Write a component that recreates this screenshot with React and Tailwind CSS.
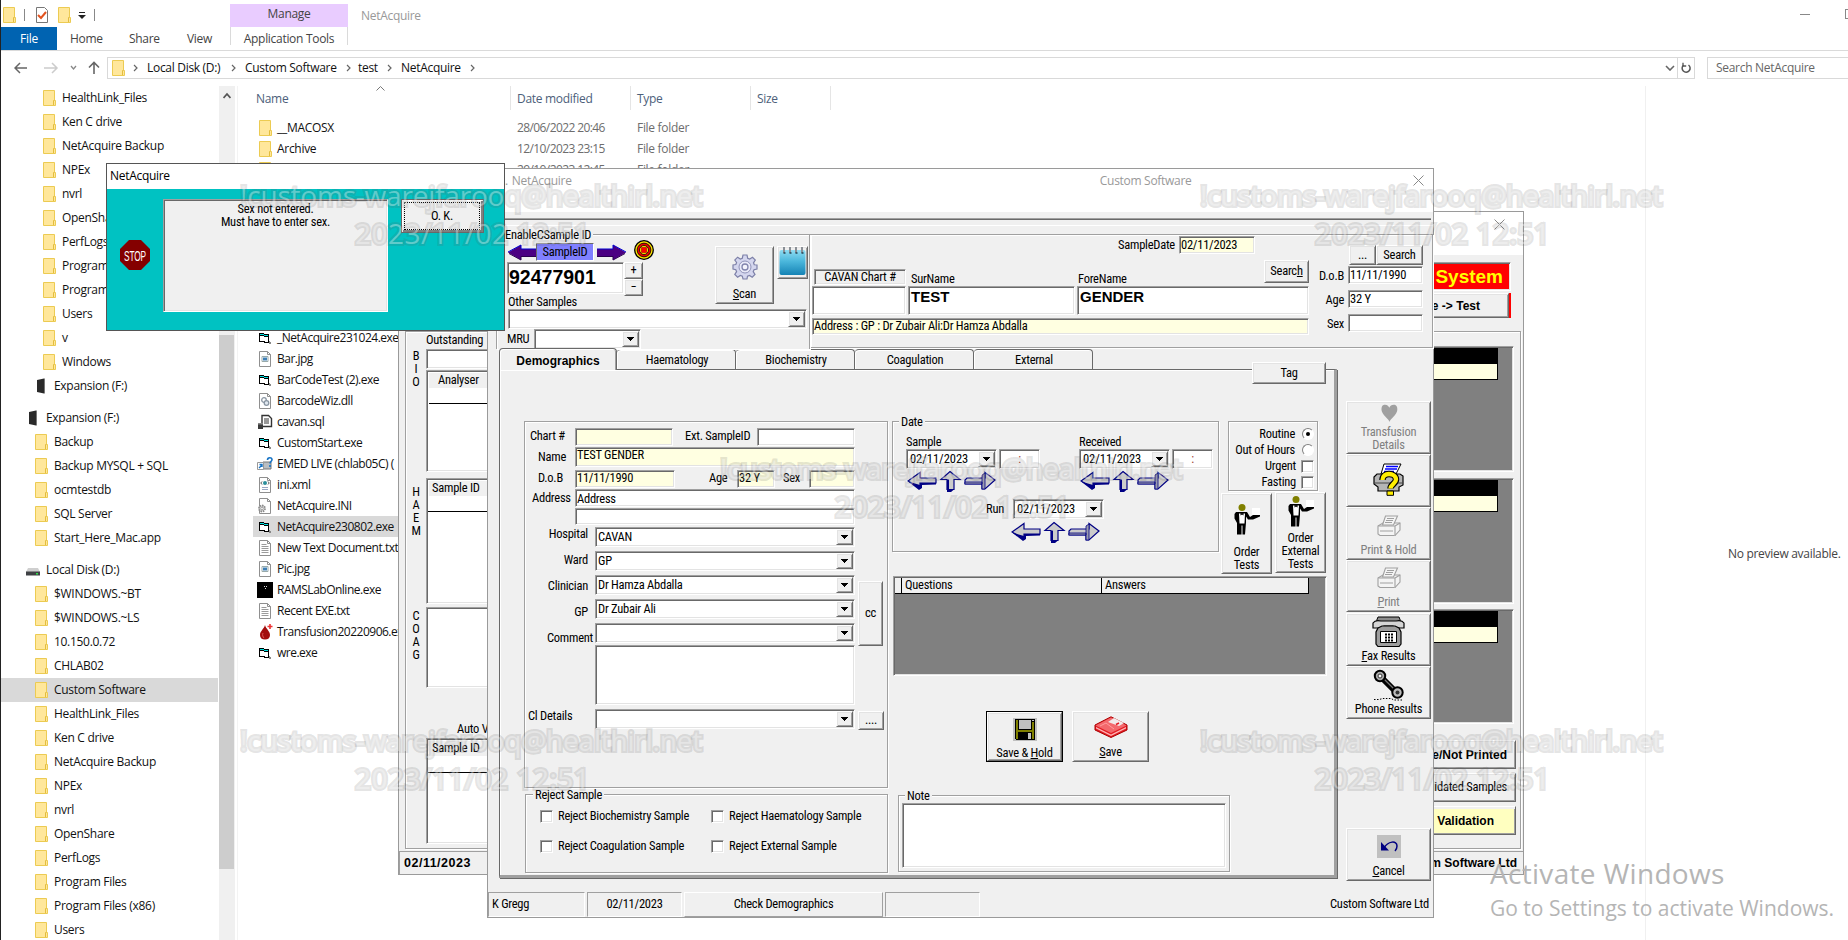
import React from "react";

const SUNK =
  "border border-t-[#a0a0a0] border-l-[#a0a0a0] border-r-white border-b-white shadow-[inset_1px_1px_0_#696969,inset_-1px_-1px_0_#e3e3e3]";
const RAISED =
  "bg-[#f0f0f0] border border-t-white border-l-white border-r-[#696969] border-b-[#696969] shadow-[inset_1px_1px_0_#e3e3e3,inset_-1px_-1px_0_#a0a0a0]";
const GROUP = "border border-[#a0a0a0] shadow-[1px_1px_0_#fff,inset_1px_1px_0_#fff]";
const FORM =
  "font-['Roboto_Condensed','Roboto',sans-serif] font-stretch-condensed text-[12.5px] leading-none tracking-[-0.25px] whitespace-nowrap text-black";
const BOLD = "font-['Liberation_Sans',sans-serif] text-[12px] font-bold tracking-normal";
const BOLD_FACE = "font-['Liberation_Sans',sans-serif] font-bold tracking-normal";
const SHELL = "font-['Open_Sans',sans-serif] font-stretch-normal text-[12px] leading-none tracking-[-0.3px] whitespace-nowrap";

/* ---------- shell icons ---------- */

function Folder() {
  return (
    <svg width="13" height="16" viewBox="0 0 13 16" className="shrink-0">
      <path d="M.5.5h11v10h1v5H.5z" fill="#ffe79b" stroke="#eccb52" />
      <path d="M10.500 15v-4.500h1" fill="none" stroke="#e3bd3e" />
    </svg>
  );
}
function DriveDark() {
  return (
    <svg width="10" height="16" viewBox="0 0 10 16" className="shrink-0">
      <path d="M1 2l7-1.500v15L1 14z" fill="#2a2a2a" />
      <path d="M8 .5h1v15H8z" fill="#777" />
    </svg>
  );
}
function Disk() {
  return (
    <svg width="14" height="16" viewBox="0 0 14 16" className="shrink-0">
      <path d="M2 6h10l2 4H0z" fill="#cfcfcf" />
      <path d="M0 9.500h14v4H0z" fill="#3f4144" />
      <path d="M10 11h2v1.500h-2z" fill="#2fe04a" />
    </svg>
  );
}
function Page({ children }) {
  return (
    <svg width="16" height="16" viewBox="0 0 16 16" className="shrink-0">
      <path d="M2.500.5h8l3 3v12h-11z" fill="#fff" stroke="#8f8f8f" />
      <path d="M10.500.5v3h3" fill="none" stroke="#8f8f8f" />
      {children}
    </svg>
  );
}
function FileIcon({ kind }) {
  if (kind === "folder") return <span className="ml-[2px] mr-px flex"><Folder /></span>;
  if (kind === "vb")
    return (
      <svg width="16" height="16" viewBox="0 0 16 16" className="shrink-0" shapeRendering="crispEdges">
        <path d="M2 3h5v1h5v9H7v-1H2z" fill="#000" />
        <path d="M3 6h4v1h4v5H8v-1H3z" fill="#fff" />
        <path d="M3 4h4v1h4v1H7V5H3z" fill="#00e0e0" />
        <path d="M12 11h1v1h1v2h-2z" fill="#888" />
      </svg>
    );
  if (kind === "jpg")
    return (
      <Page>
        <path d="M5 5.500h6v5H5z" fill="#fff" stroke="#9aa" />
        <path d="M6 6.500h4v3H6z" fill="#3f7fb5" />
      </Page>
    );
  if (kind === "dll")
    return (
      <Page>
        <circle cx="7" cy="7" r="2.300" fill="none" stroke="#8a96a3" strokeWidth="1.300" />
        <circle cx="9.500" cy="10" r="2.300" fill="#dfe7ef" stroke="#8a96a3" strokeWidth="1.300" />
      </Page>
    );
  if (kind === "sql")
    return (
      <svg width="16" height="16" viewBox="0 0 16 16" className="shrink-0">
        <path d="M5 1.500h6.500l3 3v8H5z" fill="#fff" stroke="#333" strokeWidth="1.400" />
        <path d="M7 5h5M7 7h5M7 9h5" stroke="#333" />
        <path d="M1 9h5v6H1z" fill="#3a3a3a" />
        <path d="M1 9h5v1.500H1z" fill="#888" />
      </svg>
    );
  if (kind === "link")
    return (
      <svg width="16" height="16" viewBox="0 0 16 16" className="shrink-0">
        <path d="M6 6h8v7H6z" fill="#b9bec3" stroke="#777" />
        <path d="M.5 6.500h6v7h-6z" fill="#fff" stroke="#999" />
        <path d="M2 12l3-3M2.500 8.500H5V11" stroke="#1673c5" fill="none" strokeWidth="1.400" />
        <path d="M10.500 4c0-3 4.500-3 4.500-.5 0 2-2 2-2 4M13 9v2" stroke="#1673c5" fill="none" strokeWidth="1.600" />
      </svg>
    );
  if (kind === "xml")
    return (
      <Page>
        <circle cx="8" cy="6" r="2" fill="#2b8f9c" />
        <path d="M5 4.500L3.800 6 5 7.500M11 4.500L12.200 6 11 7.500" stroke="#555" fill="none" />
        <path d="M5 10.500h6M5 12.500h6" stroke="#99a7c4" />
      </Page>
    );
  if (kind === "ini")
    return (
      <Page>
        <circle cx="5" cy="10.500" r="3" fill="#dcdcdc" stroke="#8a8a8a" strokeWidth="1.800" strokeDasharray="1.500 0.800" />
        <circle cx="5" cy="10.500" r="1.200" fill="#fff" stroke="#8a8a8a" strokeWidth="0.700" />
      </Page>
    );
  if (kind === "txt")
    return (
      <Page>
        <path d="M4.500 4.500h5M4.500 6.500h7M4.500 8.500h7M4.500 10.500h7M4.500 12.500h7" stroke="#9b9b9b" />
      </Page>
    );
  if (kind === "black")
    return (
      <svg width="16" height="16" viewBox="0 0 16 16" className="shrink-0">
        <path d="M0 0h16v16H0z" fill="#000" />
        <path d="M7 4h1v1H7zM9 4h1v1H9zM8 6h1v1H8z" fill="#ddd" />
      </svg>
    );
  return (
    <svg width="16" height="16" viewBox="0 0 16 16" className="shrink-0">
      <path d="M8 1c1 4 5 6 5 10 0 3-2 4.500-5 4.500S3 14 3 11c0-4 4-6 5-10z" fill="#a30d0d" />
      <path d="M6 9c-1 2 0 4 1 5" stroke="#d55" fill="none" />
      <path d="M13 0v5M10.500 2.500h5" stroke="#e33" strokeWidth="1.600" />
    </svg>
  );
}

/* ---------- explorer ---------- */

const TREE = [
  ["f", 2, "HealthLink_Files"], ["f", 2, "Ken C drive"], ["f", 2, "NetAcquire Backup"], ["f", 2, "NPEx"],
  ["f", 2, "nvrl"], ["f", 2, "OpenShare"], ["f", 2, "PerfLogs"], ["f", 2, "Program Files"],
  ["f", 2, "Program Files (x86)"], ["f", 2, "Users"], ["f", 2, "v"], ["f", 2, "Windows"],
  ["x", 1, "Expansion (F:)"], ["gap"],
  ["x", 0, "Expansion (F:)"], ["f", 1, "Backup"], ["f", 1, "Backup MYSQL + SQL"], ["f", 1, "ocmtestdb"],
  ["f", 1, "SQL Server"], ["f", 1, "Start_Here_Mac.app"], ["gap"],
  ["d", 0, "Local Disk (D:)"], ["f", 1, "$WINDOWS.~BT"], ["f", 1, "$WINDOWS.~LS"], ["f", 1, "10.150.0.72"],
  ["f", 1, "CHLAB02"], ["f", 1, "Custom Software", true], ["f", 1, "HealthLink_Files"], ["f", 1, "Ken C drive"],
  ["f", 1, "NetAcquire Backup"], ["f", 1, "NPEx"], ["f", 1, "nvrl"], ["f", 1, "OpenShare"], ["f", 1, "PerfLogs"],
  ["f", 1, "Program Files"], ["f", 1, "Program Files (x86)"], ["f", 1, "Users"],
];
const INDENT = ["pl-[26px]", "pl-[34px]", "pl-[42px]"];

const FILES = [
  ["folder", "__MACOSX", "28/06/2022 20:46"], ["folder", "Archive", "12/10/2023 23:15"],
  ["folder", "", "29/10/2023 12:45"],
  null, null, null, null, null, null, null,
  ["vb", "_NetAcquire231024.exe"], ["jpg", "Bar.jpg"], ["vb", "BarCodeTest (2).exe"], ["dll", "BarcodeWiz.dll"],
  ["sql", "cavan.sql"], ["vb", "CustomStart.exe"], ["link", "EMED LIVE (chlab05C) ("], ["xml", "ini.xml"],
  ["ini", "NetAcquire.INI"], ["vb", "NetAcquire230802.exe", "", true], ["txt", "New Text Document.txt"],
  ["jpg", "Pic.jpg"], ["black", "RAMSLabOnline.exe"], ["txt", "Recent EXE.txt"],
  ["blood", "Transfusion20220906.exe"], ["vb", "wre.exe"],
];

function Crumb() {
  return (
    <svg width="5" height="8" viewBox="0 0 5 8" className="shrink-0">
      <path d="M1 1l3 3-3 3" fill="none" stroke="#666" strokeWidth="1.200" />
    </svg>
  );
}

function Explorer() {
  return (
    <div className={`flex h-full flex-col border-l border-[#222] bg-white text-[#111] ${SHELL}`}>
      <div className="box-content flex h-[50px] shrink-0 border-b border-[#dadada]">
        <div className="flex w-[229px] flex-col">
          <div className="flex h-[27px] items-center pl-[2px] pt-[3px]">
            <Folder />
            <i className="ml-[8px] h-3 w-px bg-[#888]" />
            <svg width="14" height="16" viewBox="0 0 14 16" className="ml-[10px]">
              <path d="M1.500.5h8l3 3v12h-11z" fill="#fff" stroke="#777" />
              <path d="M3 8l3 3 5-6" fill="none" stroke="#e2531f" strokeWidth="2" />
            </svg>
            <span className="ml-[9px] flex"><Folder /></span>
            <svg width="8" height="7" viewBox="0 0 8 7" className="ml-[7px]">
              <path d="M1 0h6v1H1zM0 3h8L4 7z" fill="#222" />
            </svg>
            <i className="ml-[8px] h-3 w-px bg-[#888]" />
          </div>
          <div className="flex h-[23px] items-center">
            <div className="flex h-full w-14 items-center justify-center bg-[#0063b1] text-white">File</div>
            <span className="ml-[13px] w-[59px] text-[#444]">Home</span>
            <span className="w-[58px] text-[#444]">Share</span>
            <span className="text-[#444]">View</span>
          </div>
        </div>
        <div className="flex w-[118px] flex-col pt-1 text-[#444]">
          <div className="flex h-[23px] items-center justify-center bg-[#e9ccff] pb-1">Manage</div>
          <div className="flex h-[18px] items-center justify-center border-x border-[#dadada] pt-[5px]">
            Application Tools
          </div>
        </div>
        <span className="ml-[13px] mt-[10px] text-[#999]">NetAcquire</span>
        <div className="ml-auto flex pt-[9px]">
          <i className="mr-[35px] mt-[5px] h-px w-[10px] bg-[#888]" />
          <i className="h-[10px] w-[3px] border border-r-0 border-[#888]" />
        </div>
      </div>

      <div className="flex h-[35px] shrink-0 items-center pb-[2px] pl-[13px]">
        <svg width="86" height="14" viewBox="0 0 86 14" fill="none" className="shrink-0">
          <path d="M6 2L1 7l5 5M1 7h12" stroke="#666" strokeWidth="1.500" />
          <path d="M38 2l5 5-5 5M43 7H30" stroke="#ccc" strokeWidth="1.500" />
          <path d="M57 5l2.500 3L62 5" stroke="#888" strokeWidth="1.300" />
          <path d="M75 6.500l5-5 5 5M80 2v11" stroke="#666" strokeWidth="1.600" />
        </svg>
        <div className="ml-[7px] flex h-[22px] w-[1588px] items-center border border-[#d9d9d9] pl-1">
          <Folder />
          <span className="ml-[8px] flex"><Crumb /></span>
          <span className="ml-[9px] w-[84px]">Local Disk (D:)</span>
          <Crumb />
          <span className="ml-[9px] w-[101px]">Custom Software</span>
          <Crumb />
          <span className="ml-[7px] w-[29px]">test</span>
          <Crumb />
          <span className="ml-[9px] w-[69px]">NetAcquire</span>
          <Crumb />
          <svg width="10" height="6" viewBox="0 0 10 6" className="ml-auto mr-[2px]" fill="none">
            <path d="M1 1l4 4 4-4" stroke="#666" strokeWidth="1.600" />
          </svg>
          <div className="flex h-full w-[17px] items-center justify-center border-l border-[#d9d9d9]">
            <svg width="12" height="12" viewBox="0 0 12 12" fill="none">
              <path d="M8.500 3A4 4 0 1 1 3.500 3.200" stroke="#555" strokeWidth="1.500" />
              <path d="M3 .8v3.200h3.200" stroke="#555" strokeWidth="1.300" />
            </svg>
          </div>
        </div>
        <div className="ml-3 flex h-[22px] flex-1 items-center border border-r-0 border-[#d9d9d9] pl-2 text-[#666]">
          Search NetAcquire
        </div>
      </div>

      <div className="flex min-h-0 flex-1">
        <div className="w-[218px] shrink-0">
          {TREE.map((r, i) =>
            r[0] === "gap" ? (
              <div key={i} className="h-2" />
            ) : (
              <div key={i} className={`flex h-6 items-center ${INDENT[r[1]]} ${r[3] ? "w-[217px] bg-[#d9d9d9]" : ""}`}>
                <span className={`flex w-[19px] ${r[0] === "f" ? "" : "-ml-px mr-px"}`}>
                  {r[0] === "f" ? <Folder /> : r[0] === "x" ? <span className="ml-[2px] flex"><DriveDark /></span> : <Disk />}
                </span>
                <span>{r[2]}</span>
              </div>
            )
          )}
        </div>
        <div className="flex w-4 shrink-0 flex-col items-center bg-[#f0f0f0]">
          <svg width="8" height="249" viewBox="0 0 8 249" fill="none" className="shrink-0">
            <path d="M.5 12L4 8l3.500 4" stroke="#555" strokeWidth="1.800" />
          </svg>
          <div className="h-[534px] w-[15px] shrink-0 self-start bg-[#cdcdcd]" />
        </div>
        <div className="ml-[2px] w-px bg-[#f3f3f3]" />
        <div className="flex w-[1407px] shrink-0 flex-col">
          <div className="relative flex h-[31px] shrink-0 text-[#4c607a]">
            <svg width="9" height="5" viewBox="0 0 9 5" fill="none" className="absolute left-[138px] top-0">
              <path d="M.5 4.500l4-4 4 4" stroke="#777" />
            </svg>
            <div className="flex h-6 w-[273px] items-center border-r border-[#e5e5e5] pl-[18px] pt-[2px]">Name</div>
            <div className="flex h-6 w-[120px] items-center border-r border-[#e5e5e5] pl-[6px] pt-[2px]">Date modified</div>
            <div className="flex h-6 w-[120px] items-center border-r border-[#e5e5e5] pl-[6px] pt-[2px]">Type</div>
            <div className="flex h-6 w-20 items-center border-r border-[#e5e5e5] pl-[6px] pt-[2px]">Size</div>
          </div>
          {FILES.map((f, i) => (
            <div key={i} className={`ml-[15px] flex h-[21px] items-center pl-1 ${f && f[3] ? "w-[160px] bg-[#d9d9d9]" : ""}`}>
              {f && (
                <>
                  <FileIcon kind={f[0]} />
                  <span className={`ml-1 w-[240px] shrink-0 ${i > 9 ? "tracking-[-0.5px]" : ""}`}>{f[1]}</span>
                  {f[2] ? <span className="w-[120px] tracking-[-0.6px] text-[#6d6d6d]">{f[2]}</span> : null}
                  {f[2] ? <span className="text-[#6d6d6d]">File folder</span> : null}
                </>
              )}
            </div>
          ))}
        </div>
        <div className="flex flex-1 items-center border-l border-[#f0f0f0] pl-[82px] pt-[82px] text-[#444]">
          No preview available.
        </div>
      </div>
    </div>
  );
}

/* ---------- shared form pieces ---------- */

function Caret() {
  return (
    <svg width="7" height="4" viewBox="0 0 7 4" shapeRendering="crispEdges">
      <path d="M0 0h7v1H6v1H5v1H4v1H3V3H2V2H1V1H0z" fill="#000" />
    </svg>
  );
}
function Combo({ value, className }) {
  return (
    <div className={`flex items-center bg-white p-px ${SUNK} ${className}`}>
      <span className="flex-1 pl-px">{value}</span>
      <div className={`flex h-full w-[17px] items-center justify-center ${RAISED}`}>
        <Caret />
      </div>
    </div>
  );
}
function Field({ value, className }) {
  return <div className={`flex shrink-0 items-center pl-px ${SUNK} ${className}`}>{value}</div>;
}
function Legend({ children, className }) {
  return <span className={`absolute -top-[6px] bg-[#f0f0f0] px-[2px] ${className}`}>{children}</span>;
}
function Close() {
  return (
    <svg width="11" height="11" viewBox="0 0 11 11">
      <path d="M.5.5l10 10M10.500.5l-10 10" stroke="#888" />
    </svg>
  );
}
function Vertical({ text, className }) {
  return (
    <div className={`flex w-5 flex-col items-center ${className}`}>
      {text.split("").map((c, i) => (
        <span key={i} className="flex h-[13px] items-center">{c}</span>
      ))}
    </div>
  );
}

/* ---------- window behind ---------- */

function MiniGrid({ title, className, lineClass }) {
  return (
    <div className={`overflow-hidden bg-white p-[1px] ${SUNK} ${className}`}>
      <div className="ml-px mt-px flex h-[15px] items-center bg-[#f0f0f0] pl-[3px]">{title}</div>
      <div className={`border-b border-black ${lineClass}`} />
    </div>
  );
}
function DarkGrid({ className }) {
  return (
    <div className={`bg-[#808080] pt-[1px] ${SUNK} ${className}`}>
      <div className="h-4 w-[73px] bg-black" />
      <div className="h-4 w-[73px] border-b border-r border-black bg-[#ffffe1]" />
    </div>
  );
}
function OutstandingWindow() {
  return (
    <div className={`absolute left-[398px] top-[211px] flex h-[664px] w-[1126px] flex-col border border-[#9a9a9a] bg-[#f0f0f0] ${FORM}`}>
      <div className="flex h-[43px] shrink-0 justify-end bg-white pr-[18px] pt-[7px]">
        <Close />
      </div>
      <div className="flex h-[76px] shrink-0 flex-col items-end pr-3 pt-[7px]">
        <div className={`flex h-[29px] w-[110px] items-center justify-end bg-[#ff0000] pr-[7px] text-[19px] text-[#ffff00] ${SUNK} ${BOLD_FACE}`}>
          System
        </div>
        <div className="mt-[2px] flex h-[25px] border-r-2 border-[#ff0000]">
          <div className={`flex w-[110px] items-center justify-end pr-[28px] ${RAISED} ${BOLD}`}>e -&gt; Test</div>
        </div>
      </div>
      <div className={`ml-[6px] flex h-[518px] w-[1116px] shrink-0 justify-between ${GROUP}`}>
        <div className="flex">
          <div className="w-5">
            <Vertical text="BIO" className="pt-[18px]" />
            <Vertical text="HAEM" className="pt-[97px]" />
            <Vertical text="COAG" className="pt-[72px]" />
          </div>
          <div className="w-[120px]">
            <div className="flex h-[17px] items-center">Outstanding</div>
            <Field className="h-5 bg-white" />
            <div className={`mt-[1px] h-[102px] bg-white p-[2px] ${SUNK}`}>
              <div className="flex h-[15px] items-center bg-[#f0f0f0] pl-[9px]">Analyser</div>
              <div className="h-4 border-b border-black" />
            </div>
            <MiniGrid title="Sample ID" className="mt-[6px] h-[126px]" lineClass="h-4" />
            <Field className="mt-[3px] h-[81px] bg-white" />
            <div className="mt-[32px] flex h-[18px] items-center pl-[31px]">Auto V</div>
            <MiniGrid title="Sample ID" className="h-[106px]" lineClass="h-[17px]" />
          </div>
        </div>
        <div className="flex flex-col items-end pr-[4px] pt-[14px]">
          <div className="pr-[2px]">
            <DarkGrid className="h-[126px] w-[90px]" />
            <DarkGrid className="mt-[6px] h-[126px] w-[90px]" />
            <DarkGrid className="mt-[5px] h-[115px] w-[90px]" />
          </div>
          <div className={`mt-[16px] flex h-[29px] w-[110px] items-center justify-end pr-[8px] ${RAISED} ${BOLD}`}>e/Not Printed</div>
          <div className={`mt-1 flex h-[29px] w-[110px] items-center justify-end pr-[8px] ${RAISED}`}>lidated Samples</div>
          <div className={`mt-1 flex h-[29px] w-[110px] items-center justify-end border border-b-[#696969] border-l-white border-r-[#696969] border-t-white bg-[#ffffc0] pr-[21px] shadow-[inset_0_2px_0_#f0f0f0,inset_-1px_-1px_0_#a0a0a0] ${BOLD}`}>
            Validation
          </div>
        </div>
      </div>
      <div className={`mt-[2px] flex flex-1 items-center justify-between border border-b-0 border-r-0 border-[#a0a0a0] pl-[4px] pr-[6px] ${BOLD_FACE}`}>
        <span className="text-[12.5px] tracking-[0.5px]">02/11/2023</span>
        <span className="text-[12px]">m Software Ltd</span>
      </div>
    </div>
  );
}

/* ---------- form drawings ---------- */

function PurpleArrow({ flip }) {
  return (
    <svg width="31" height="17" viewBox="0 0 31 17" className={flip ? "-scale-x-100" : ""}>
      <path d="M1 8.500L14 1v4h16v7H14v4z" fill="#4b0082" />
      <path d="M1 8L14 1v4h16" fill="none" stroke="#0000d0" />
      <path d="M2 9.500l12 6.500v-3.500h16" fill="none" stroke="#2b0050" />
    </svg>
  );
}
function Target() {
  return (
    <svg width="20" height="20" viewBox="0 0 20 20">
      <circle cx="10" cy="10" r="9.300" fill="#ffe600" stroke="#000" strokeWidth="1.300" />
      <circle cx="10" cy="10" r="6.900" fill="#e80000" stroke="#000" strokeWidth="0.800" />
      <circle cx="10" cy="10" r="4.500" fill="#ffe600" stroke="#000" strokeWidth="0.800" />
      <path d="M7.500 7.500h5v5h-5z" fill="#f00" stroke="#a00" strokeWidth="0.600" />
    </svg>
  );
}
function Gear() {
  return (
    <svg width="26" height="26" viewBox="0 0 26 26">
      <path
        d="M11 1h4l.7 3.200 2 .8L20.500 3.300l2.800 2.800-1.800 2.700.8 2L25 11v4l-3 .7-.8 2 1.800 2.700-2.800 2.800-2.700-1.800-2 .8L15 25h-4l-.7-2.800-2-.8-2.700 1.800-2.800-2.800 1.800-2.700-.8-2L1 15v-4l2.800-.5.8-2L2.800 6l2.800-2.800L8.300 5l2-.8z"
        fill="#d4d6ee" stroke="#7d80a8" strokeWidth="1.200"
      />
      <circle cx="13" cy="13" r="6" fill="#e9eaf8" stroke="#8f92b8" />
      <circle cx="13" cy="13" r="3" fill="#f4f4fc" stroke="#8285ad" strokeWidth="1.300" />
    </svg>
  );
}
function Notepad() {
  return (
    <svg width="27" height="29" viewBox="0 0 27 29">
      <defs>
        <linearGradient id="pad" x1="0" y1="0" x2="0" y2="1">
          <stop offset="0" stopColor="#8fdcf2" />
          <stop offset="0.450" stopColor="#4bb7dc" />
          <stop offset="1" stopColor="#1583b5" />
        </linearGradient>
      </defs>
      <rect x="0.500" y="3" width="26" height="25" rx="2" fill="url(#pad)" />
      <path d="M5 0v6M11 0v6M17 0v6M23 0v6" stroke="#8a8f96" strokeWidth="2" />
      <path d="M4.500 6h2M10.500 6h2M16.500 6h2M22.500 6h2" stroke="#245" strokeWidth="1.500" />
    </svg>
  );
}
function DateArrows() {
  return (
    <svg width="90" height="23" viewBox="0 0 90 23">
      <g fill="#cbcbcb" stroke="#000084" strokeWidth="1.200">
        <path d="M1 11L13 2.500V8h16v5H13v5z" />
        <path d="M43 1.500l10 8h-6v10h-7v-10h-6z" />
        <path d="M88 10L78 2.500V8H60l-2 2v4h17v5h3z" />
      </g>
      <path d="M1 11.500l11 8.500 3-2v-3l14-.5v-1.500H13v2z" fill="#000084" />
      <path d="M40 10v12h4l3-2.500h-5V9.500z" fill="#000084" />
      <path d="M58 12h17v2H58zM75 5l3-2v16h-3z" fill="#9c9cae" stroke="#000084" strokeWidth="0.800" />
    </svg>
  );
}
function Waiter() {
  return (
    <svg width="28" height="33" viewBox="0 0 28 33">
      <circle cx="9" cy="4.500" r="3.500" fill="#808000" />
      <path d="M3 9h11l3 5 3-2h7v1.500l-7 3h-5l-2-3v6l-1 12H9.500v-9h-1v9H4V20l-2.500-4.500V11z" fill="#000" />
      <path d="M6 10.500h6l-.5 10h-5z" fill="#fff" />
      <path d="M7.500 9.500v3l1.500-1 1.500 1v-3L9 10.500z" fill="#000" />
      <path d="M19 5h8v7h-8z" fill="#fff" />
    </svg>
  );
}
function Heart() {
  return (
    <svg width="18" height="18" viewBox="0 0 18 18">
      <path d="M9.500 18C9 15 2 11 1.500 6 1.300 2 3 .8 5 .8c2.500 0 3.800 1.500 4.300 3C10 2 11.500.8 13.800.8c2.200 0 3.800 1.500 3.500 5.200C17 11 10 15 9.500 18z" fill="#a0a0a0" />
    </svg>
  );
}
function PrinterQuestion() {
  return (
    <svg width="32" height="33" viewBox="0 0 32 33">
      <path d="M4 11h23l3 2v9l-4 2v4H5v-4l-4-3v-7z" fill="#b5b5b5" stroke="#000" strokeWidth="1.200" />
      <path d="M2 20h28" stroke="#444" />
      <path d="M11 1h17l-5 10H8z" fill="#fff" stroke="#000" />
      <path d="M13 3.500h12M12 6h12M11 8.500h10" stroke="#0000ff" strokeWidth="1.400" />
      <path d="M9.500 17c0-4 3-6 6.500-6s7 2 7 5.500c0 4-5.500 5-5.500 9" fill="none" stroke="#000" strokeWidth="6.500" />
      <path d="M9.500 17c0-4 3-6 6.500-6s7 2 7 5.500c0 4-5.500 5-5.500 9" fill="none" stroke="#ffee00" strokeWidth="4.300" />
      <path d="M14 28h6.500v4.300H14z" fill="#ffee00" stroke="#000" />
    </svg>
  );
}
function Printer() {
  return (
    <svg width="26" height="22" viewBox="0 0 26 22">
      <g fill="#f4f4f4" stroke="#a0a0a0" strokeWidth="1.100">
        <path d="M2 11l5-3h17v7l-5 5.500H4L2 19z" />
        <path d="M2 11h17v9.500M19 11l5-3" />
        <path d="M6.500 10l3-9h12l-4 9z" />
        <path d="M11 3.500h7M10 5.500h7M9 7.500h7M4 16h13" fill="none" />
      </g>
    </svg>
  );
}
function Fax() {
  return (
    <svg width="33" height="31" viewBox="0 0 33 31">
      <path d="M6 1h21l2 5H4z" fill="#8b8b8b" stroke="#000" />
      <path d="M1 7c2-3 6-2.500 8-2h15c2-.5 6-1 8 2v5h-8l-3-2h-9l-3 2H1z" fill="#d5d5d5" stroke="#000" strokeWidth="1.200" />
      <path d="M6 12l4-2h13l4 2 2 4v12l-2 2.500H6L4 28V16z" fill="#9d9d9d" stroke="#000" strokeWidth="1.200" />
      <path d="M8.500 15.500h16v11h-16z" fill="#fff" stroke="#000" />
      <path d="M13 17.500h2v2h-2zM16 17.500h2v2h-2zM19 17.500h2v2h-2zM13 20.500h2v2h-2zM16 20.500h2v2h-2zM19 20.500h2v2h-2zM13 23.500h2v2h-2zM16 23.500h2v2h-2zM19 23.500h2v2h-2z" fill="#000" />
    </svg>
  );
}
function Handset() {
  return (
    <svg width="32" height="32" viewBox="0 0 32 32">
      <path d="M8 8l16 16" stroke="#000" strokeWidth="6" />
      <path d="M9 8l15 15" stroke="#777" strokeWidth="1.200" />
      <circle cx="7" cy="7" r="5.200" fill="#aaa" stroke="#000" strokeWidth="2" />
      <circle cx="7" cy="7" r="2" fill="#fff" stroke="#333" />
      <circle cx="24.500" cy="23.500" r="5.200" fill="#bbb" stroke="#000" strokeWidth="2" />
      <circle cx="24.500" cy="23.500" r="2" fill="#333" />
      <path d="M1 30.500h5l4-1h8l3 1.500h9" fill="none" stroke="#000" strokeDasharray="1.500 1.500" />
    </svg>
  );
}
function Floppy() {
  return (
    <svg width="24" height="23" viewBox="0 0 24 23" shapeRendering="crispEdges">
      <path d="M0 0h24v23H0z" fill="#c0c0c0" />
      <path d="M2 1h20v21H3l-1-1z" fill="#000" />
      <path d="M3 2h2v19H3zM19 4h2v17h-2zM5 12h14v2H5z" fill="#808000" />
      <path d="M6 2h12v9H6z" fill="#c0c0c0" />
      <path d="M19 2h2v1h-2z" fill="#c0c0c0" />
      <path d="M15 15h3v6h-3z" fill="#c0c0c0" />
    </svg>
  );
}
function RedDisk() {
  return (
    <svg width="34" height="22" viewBox="0 0 34 22">
      <path d="M1 9L17 .8 33 9v5l-16 7.500L1 14z" fill="#e31b23" stroke="#a00" />
      <path d="M1.500 9.500L17 17l15.500-7.500L17 1.500z" fill="#f3686c" />
      <path d="M2 11l15 7.500L32 11v1.500L17 20 2 12.500z" fill="#ffb5b5" />
      <path d="M14 6l6-4 10 5-5 3z" fill="#f2e9e9" />
      <path d="M22 8.500l3-1.500" stroke="#e31b23" strokeWidth="1.500" />
      <path d="M6 10l6-3 8 6" stroke="#ff9d9d" fill="none" />
    </svg>
  );
}
function Undo() {
  return (
    <svg width="24" height="23" viewBox="0 0 24 23">
      <path d="M0 0h24v23H0z" fill="#c0c0c0" />
      <path d="M7 13c4-7 13-8 13-2 0 2-1 4-2 5" fill="none" stroke="#000080" strokeWidth="1.500" />
      <path d="M4 7v8.500h8z" fill="#000080" />
    </svg>
  );
}

/* ---------- main form ---------- */

const TABS = ["Haematology", "Biochemistry", "Coagulation", "External"];

function DatePick() {
  return <Combo value={<span className="pl-[1px] tracking-[-0.05px]">02/11/2023</span>} className="h-5 w-[91px]" />;
}
function TimeBox() {
  return (
    <div className={`flex h-5 w-[41px] items-center justify-center bg-white text-[#a04030] ${SUNK}`}>:</div>
  );
}
function Check({ label, className }) {
  return (
    <div className={`flex items-center ${className || ""}`}>
      <div className={`h-[13px] w-[13px] shrink-0 bg-white ${SUNK}`} />
      <span className="ml-[5px]">{label}</span>
    </div>
  );
}
function SideButton({ children, className }) {
  return (
    <div className={`flex w-[85px] flex-col items-center ${RAISED} ${className}`}>{children}</div>
  );
}

function HeaderLeft() {
  return (
    <div className={`relative h-[115px] w-[314px] border-b-0 pl-[10px] pt-1 ${GROUP}`}>
      <Legend className="left-[6px]">EnableCSample ID</Legend>
      <div className="flex">
        <div className="flex w-[147px] flex-col">
          <div className="flex h-[23px] items-end pb-px">
            <PurpleArrow />
            <div className="-ml-[2px] flex h-[18px] w-[58px] items-center justify-center border border-b-white border-l-[#696969] border-r-white border-t-[#696969] bg-[#8080ff]">
              SampleID
            </div>
            <span className="ml-[2px] flex"><PurpleArrow flip /></span>
            <span className="mb-px ml-[7px] flex"><Target /></span>
          </div>
          <div className="flex">
            <Field value="92477901" className={`h-8 w-[117px] bg-white pl-[2px] text-[19.5px] ${BOLD_FACE}`} />
            <div className="flex flex-col">
              <div className={`flex h-[17px] w-[19px] items-center justify-center ${RAISED}`}>+</div>
              <div className={`flex h-[17px] w-[19px] items-center justify-center ${RAISED}`}>−</div>
            </div>
          </div>
        </div>
        <div className={`ml-[61px] mt-[7px] flex h-[58px] w-[59px] flex-col items-center pt-[7px] ${RAISED}`}>
          <Gear />
          <span className="mt-[8px]"><u>S</u>can</span>
        </div>
        <div className={`ml-[3px] mt-[7px] flex h-[33px] w-[31px] justify-center ${RAISED}`}><Notepad /></div>
      </div>
      <div className="-mt-[8px] flex h-[12px] items-center pl-[1px]">Other Samples</div>
      <Combo className="ml-px mt-px h-5 w-[299px]" />
      <div className="flex h-5 items-center">
        <span className="w-[27px]">MRU</span>
        <Combo className="h-5 w-[107px]" />
      </div>
    </div>
  );
}

function HeaderRight() {
  return (
    <div className={`flex h-[114px] w-[623px] ${GROUP}`}>
      <div className="ml-[1px] w-[498px]">
        <div className="flex h-5 items-center pl-[306px]">
          <span className="w-[41px] grow">SampleDate</span>
          <Field value="02/11/2023" className="mr-[55px] h-[18px] w-[76px] bg-[#ffffe1]" />
        </div>
        <div className="flex h-[31px]">
          <div className={`ml-[2px] mt-[14px] flex h-4 w-[92px] items-center justify-center ${SUNK}`}>CAVAN Chart #</div>
          <span className="ml-[5px] mt-[18px] w-[167px]">SurName</span>
          <span className="mt-[18px] w-[186px]">ForeName</span>
          <div className={`mt-[5px] flex h-[23px] w-[45px] items-center justify-center ${RAISED}`}>Searc<u>h</u></div>
        </div>
        <div className="flex gap-[2px]">
          <Field className="h-[29px] w-[94px] bg-white" />
          <div className={`h-[29px] w-[167px] bg-white pl-[2px] pt-[2px] text-[15px] ${SUNK} ${BOLD_FACE}`}>TEST</div>
          <div className={`h-[29px] w-[232px] bg-white pl-[2px] pt-[2px] text-[15px] ${SUNK} ${BOLD_FACE}`}>GENDER</div>
        </div>
        <Field value="Address : GP : Dr Zubair Ali:Dr Hamza Abdalla" className="mt-[3px] h-[17px] w-[497px] bg-[#ffffe1]" />
      </div>
      <div className="flex flex-col items-end">
        <div className="mt-[10px] flex h-5">
          <div className={`flex w-[27px] items-center justify-center ${RAISED}`}>...</div>
          <div className={`flex w-[47px] items-center justify-center ${RAISED}`}>Search</div>
        </div>
        {[["D.o.B", "11/11/1990", "mt-px"], ["Age", "32 Y", "mt-[6px]"], ["Sex", "", "mt-[6px]"]].map(([l, v, m]) => (
          <div key={l} className={`flex h-[18px] items-center ${m}`}>
            <span className="w-[38px] pr-1 pt-[2px] text-right">{l}</span>
            <Field value={v} className="h-[18px] w-[75px] bg-white" />
          </div>
        ))}
      </div>
    </div>
  );
}

function PatientFrame() {
  return (
    <div className={`h-[367px] w-[364px] pt-[5px] ${GROUP}`}>
      <div className="flex h-[19px] items-center">
        <span className="w-[50px] pl-[5px]">Chart #</span>
        <Field className="h-[18px] w-[98px] bg-[#ffffe1]" />
        <span className="ml-[12px] w-[72px]">Ext. SampleID</span>
        <Field className="h-[18px] w-[98px] bg-white" />
      </div>
      <div className="mt-px flex h-5 items-center">
        <span className="w-[50px] pl-[13px]">Name</span>
        <Field value="TEST GENDER" className="h-5 w-[280px] bg-[#ffffe1] pb-[3px]" />
      </div>
      <div className="mt-[2px] flex h-[19px] items-center">
        <span className="w-[50px] pl-[13px]">D.o.B</span>
        <Field value="11/11/1990" className="h-[18px] w-[100px] bg-[#ffffe1]" />
        <span className="ml-[34px] w-[28px]">Age</span>
        <Field value="32 Y" className="h-[18px] w-[38px] bg-[#ffffe1]" />
        <span className="ml-[8px] w-[26px]">Sex</span>
        <Field className="h-[18px] w-[46px] bg-[#ffffe1]" />
      </div>
      <div className="mt-px flex h-[18px] items-center">
        <span className="w-[50px] pl-[7px]">Address</span>
        <Field value="Address" className="h-[18px] w-[280px] bg-white pt-[2px]" />
      </div>
      <Field className="ml-[50px] mt-px h-[17px] w-[280px] bg-white" />
      <div className="mt-[2px] flex">
        <div className="-mt-[6px] flex w-[70px] flex-col items-end">
          <span className="mr-[7px] flex h-[26px] items-center">Hospital</span>
          <span className="mr-[7px] flex h-[26px] items-center">Ward</span>
          <span className="mr-[7px] flex h-[26px] items-center">Clinician</span>
          <span className="mr-[7px] flex h-[26px] items-center">GP</span>
          <span className="mr-[2px] flex h-[26px] items-center">Comment</span>
          <span className="mt-[52px] flex h-[26px] items-center self-start pl-[3px]">Cl Details</span>
        </div>
        <div className="flex w-[260px] flex-col gap-1">
          <Combo value="CAVAN" className="h-5" />
          <Combo value="GP" className="h-5" />
          <Combo value="Dr Hamza Abdalla" className="h-5" />
          <Combo value="Dr Zubair Ali" className="h-5" />
          <Combo value="" className="h-5" />
          <div className={`-mt-[2px] h-[60px] bg-white ${SUNK}`} />
          <Combo value="" className="h-5" />
        </div>
        <div className="ml-[3px]">
          <div className={`mt-[54px] flex h-[65px] w-[25px] items-center justify-center ${RAISED}`}>cc</div>
          <div className={`mt-[65px] flex h-[19px] w-[26px] items-center justify-center ${RAISED}`}>....</div>
        </div>
      </div>
    </div>
  );
}

function DateFrame() {
  return (
    <div className={`relative h-[131px] w-[327px] pl-[13px] pt-[14px] ${GROUP}`}>
      <Legend className="left-[6px]">Date</Legend>
      <div className="flex">
        {["Sample", "Received"].map((l, i) => (
          <div key={l} className={i ? "ml-[39px]" : ""}>
            <div className="flex h-[13px] items-center">{l}</div>
            <div className="flex gap-[2px]">
              <DatePick />
              <TimeBox />
            </div>
            <div className="ml-px mt-[1px] flex"><DateArrows /></div>
          </div>
        ))}
      </div>
      <div className="mt-[6px] flex items-center pl-[80px]">
        <span className="w-[27px]">Run</span>
        <DatePick />
      </div>
      <div className="ml-[105px] mt-[2px] flex"><DateArrows /></div>
    </div>
  );
}

function OptionsFrame() {
  return (
    <div className={`ml-[6px] flex h-[70px] w-[90px] flex-col items-end pr-[3px] pt-[4px] ${GROUP}`}>
      {["Routine", "Out of Hours"].map((l, i) => (
        <div key={l} className="flex h-4 items-center gap-[7px]">
          {l}
          <div className="flex h-3 w-3 items-center justify-center rounded-full border border-b-white border-l-[#808080] border-r-white border-t-[#808080] bg-white">
            {i === 0 && <div className="h-1 w-1 rounded-full bg-black" />}
          </div>
        </div>
      ))}
      {["Urgent", "Fasting"].map((l) => (
        <div key={l} className="flex h-4 items-center gap-[5px]">
          {l}
          <div className={`h-[13px] w-[13px] bg-white ${SUNK}`} />
        </div>
      ))}
    </div>
  );
}

function DemographicsPage() {
  return (
    <div className="relative -mt-px flex h-[509px] w-[838px] border-b-[3px] border-l border-r-[3px] border-t border-b-[#a0a0a0] border-l-[#696969] border-r-[#a0a0a0] border-t-[#696969] shadow-[inset_1px_1px_0_#fff,1px_1px_0_#696969]">
      <div className={`absolute -top-[8px] left-[752px] flex h-[22px] w-[74px] items-center justify-center ${RAISED}`}>Tag</div>
      <div className="ml-6 mt-[51px]">
        <PatientFrame />
        <div className={`relative ml-px mt-[6px] h-[79px] w-[363px] pl-[14px] pt-[15px] ${GROUP}`}>
          <Legend className="left-[7px]">Reject Sample</Legend>
          <div className="flex">
            <Check label="Reject Biochemistry Sample" className="w-[171px]" />
            <Check label="Reject Haematology Sample" />
          </div>
          <div className="mt-[17px] flex">
            <Check label="Reject Coagulation Sample" className="w-[171px]" />
            <Check label="Reject External Sample" />
          </div>
        </div>
      </div>
      <div className="ml-[4px] mt-[51px]">
        <div className="flex h-[153px]">
          <DateFrame />
          <div className="ml-[3px]">
            <OptionsFrame />
            <div className="-ml-px flex gap-[3px]">
              <div className={`mt-[2px] flex h-[81px] w-[51px] flex-col items-center pt-[9px] ${RAISED}`}>
                <Waiter />
                <span className="mt-[9px] text-center leading-[13px]">Order<br />Tests</span>
              </div>
              <div className={`mt-[1px] flex h-[81px] w-[51px] flex-col items-center pt-[2px] ${RAISED}`}>
                <Waiter />
                <span className="mt-[3px] text-center leading-[13px]">Order<br />External<br />Tests</span>
              </div>
            </div>
          </div>
        </div>
        <div className={`ml-px mt-[2px] h-[100px] w-[434px] bg-[#808080] ${SUNK}`}>
          <div className="ml-px mt-px flex h-4 w-[414px] items-center border-b border-r border-black bg-[#f0f0f0]">
            <div className="h-full w-[7px] border-r border-black" />
            <div className="flex h-full w-[200px] items-center border-r border-black pl-[3px]">Questions</div>
            <span className="pl-[3px]">Answers</span>
          </div>
        </div>
        <div className="ml-[94px] mt-[35px] flex gap-[9px]">
          <div className="h-[51px] w-[77px] border border-black">
            <div className={`flex h-full flex-col items-center pt-[5px] ${RAISED}`}>
              <Floppy />
              <span className="mt-[6px]">Save &amp; <u>H</u>old</span>
            </div>
          </div>
          <div className={`flex h-[51px] w-[77px] flex-col items-center pt-[4px] ${RAISED}`}>
            <RedDisk />
            <span className="mt-[8px]"><u>S</u>ave</span>
          </div>
        </div>
        <div className={`relative ml-[6px] mt-[33px] h-[77px] w-[332px] pl-[3px] pt-[7px] ${GROUP}`}>
          <Legend className="left-[6px]">Note</Legend>
          <div className={`h-[65px] w-[324px] bg-white ${SUNK}`} />
        </div>
      </div>
    </div>
  );
}

function MainWindow() {
  return (
    <div className={`absolute left-[487px] top-[168px] flex h-[750px] w-[947px] flex-col border border-[#9a9a9a] bg-[#f0f0f0] ${FORM}`}>
      <div className={`flex h-[43px] shrink-0 bg-white pl-[17px] pr-[9px] pt-[6px] text-[#999] ${SHELL}`}>
        <span>.</span>
        <span className="ml-[4px] w-[588px]">NetAcquire</span>
        <span>Custom Software</span>
        <span className="ml-auto"><Close /></span>
      </div>
      <div className="mt-[6px] h-[2px] w-[943px] shrink-0 border-b border-t border-b-[#696969] border-t-[#a0a0a0]" />
      <div className="mt-[5px] h-px shrink-0 bg-white" />
      <div className="ml-2 mt-[8px] flex h-[114px] shrink-0">
        <HeaderLeft />
        <HeaderRight />
      </div>
      <div className="mt-px flex h-[530px] shrink-0 pl-[11px]">
        <div>
          <div className="flex h-[21px] items-end">
            <div className={`relative z-10 flex h-[22px] w-[118px] items-center justify-center rounded-t-[4px] border border-b-0 border-[#696969] bg-[#f0f0f0] pt-[2px] shadow-[inset_1px_1px_0_#fff,inset_-1px_0_0_#a0a0a0] ${BOLD}`}>
              Demographics
            </div>
            {TABS.map((t) => (
              <div key={t} className="flex h-[21px] w-[119px] items-center justify-center rounded-t-[4px] border border-b-0 border-l-0 border-[#696969] pl-[2px] shadow-[inset_1px_1px_0_#fff]">
                {t}
              </div>
            ))}
          </div>
          <DemographicsPage />
        </div>
        <div className="ml-[9px] pt-[52px]">
          <SideButton className="h-[53px] pt-[2px] text-[#808080]">
            <Heart />
            <span className="mt-[3px] text-center leading-[13px]">Transfusion<br />Details</span>
          </SideButton>
          <SideButton className="h-[53px] pt-[8px]"><PrinterQuestion /></SideButton>
          <SideButton className="h-[53px] pt-[7px] text-[#808080]">
            <Printer />
            <span className="mt-[7px]">Print &amp; Hold</span>
          </SideButton>
          <SideButton className="h-[52px] pt-[6px] text-[#808080]">
            <Printer />
            <span className="mt-[7px]"><u>P</u>rint</span>
          </SideButton>
          <SideButton className="mt-px h-[53px] pt-[2px]">
            <Fax />
            <span className="mt-[3px]"><u>F</u>ax Results</span>
          </SideButton>
          <SideButton className="h-[53px] pt-[2px]">
            <Handset />
            <span className="mt-[2px]">Phone Results</span>
          </SideButton>
          <SideButton className="mt-[109px] h-[53px] pt-[6px]">
            <Undo />
            <span className="mt-[7px]"><u>C</u>ancel</span>
          </SideButton>
        </div>
      </div>
      <div className="mt-[13px] flex h-[25px] shrink-0 items-stretch">
        <div className="flex w-[97px] items-center border border-b-white border-l-[#a0a0a0] border-r-white border-t-[#a0a0a0] pl-[3px]">K Gregg</div>
        <div className="ml-[2px] flex w-[95px] items-center justify-center border border-b-white border-l-[#a0a0a0] border-r-white border-t-[#a0a0a0]">02/11/2023</div>
        <div className="ml-[2px] flex w-[199px] items-center justify-center border border-b-[#a0a0a0] border-l-white border-r-[#a0a0a0] border-t-white">Check Demographics</div>
        <div className="ml-[2px] w-[95px] border border-b-white border-l-[#a0a0a0] border-r-white border-t-[#a0a0a0]" />
        <span className="ml-auto self-center pr-[4px]">Custom Software Ltd</span>
      </div>
    </div>
  );
}

/* ---------- message box ---------- */

function MessageBox() {
  return (
    <div className="absolute left-[106px] top-[163px] flex h-[168px] w-[399px] flex-col border border-[#555] bg-[#00c2c2]">
      <div className={`flex h-[25px] shrink-0 items-center bg-white pb-px pl-[3px] text-black ${SHELL}`}>NetAcquire</div>
      <div className={`flex items-start pl-[13px] pt-[10px] ${FORM}`}>
        <svg width="30" height="30" viewBox="0 0 30 30" className="mt-[41px]">
          <path d="M9 0h12l9 9v12l-9 9H9l-9-9V9z" fill="#840000" />
          <text x="15" y="20.500" textAnchor="middle" textLength="22" lengthAdjust="spacingAndGlyphs" fill="#fff" fontSize="15" fontFamily="Liberation Sans, sans-serif">STOP</text>
        </svg>
        <div className={`ml-[13px] h-[113px] w-[225px] bg-[#f0f0f0] pt-[2px] text-center leading-[13px] ${SUNK}`}>
          Sex not entered.<br />Must have to enter sex.
        </div>
        <div className="ml-[13px] h-[34px] w-[83px] border border-[#696969] bg-[#f0f0f0] p-[2px] shadow-[inset_1px_1px_0_#fff,inset_-2px_-2px_0_#808080]">
          <div className="flex h-[28px] w-[76px] items-center justify-center border border-dotted border-black">O. K.</div>
        </div>
      </div>
    </div>
  );
}

/* ---------- overlays ---------- */

const MARKS = ["left-[240px] top-[176px]", "left-[1200px] top-[176px]", "left-[720px] top-[449px]", "left-[240px] top-[721px]", "left-[1200px] top-[721px]"];

function Watermark({ place }) {
  return (
    <div className={`pointer-events-none absolute flex w-[463px] flex-col whitespace-nowrap font-['Open_Sans',sans-serif] text-[28px] leading-[38px] text-white/35 [-webkit-text-stroke:4px_rgba(90,90,90,0.17)] [paint-order:stroke] ${place}`}>
      <span className="tracking-[-0.2px]">!customs-warejfarooq@healthirl.net</span>
      <span className="pl-[115px] tracking-[0.5px]">2023/11/02 12:51</span>
    </div>
  );
}

export default function App() {
  return (
    <div className="relative h-[940px] w-[1848px] overflow-hidden bg-white">
      <Explorer />
      <OutstandingWindow />
      <MainWindow />
      <MessageBox />
      {MARKS.map((m) => (
        <Watermark key={m} place={m} />
      ))}
      <div className="absolute left-[1490px] top-[855px] whitespace-nowrap font-['Open_Sans',sans-serif] text-[#b5b5b5]">
        <div className="text-[28px] leading-[36px] tracking-[0.3px]">Activate Windows</div>
        <div className="text-[21px] leading-[34px]">Go to Settings to activate Windows.</div>
      </div>
    </div>
  );
}
